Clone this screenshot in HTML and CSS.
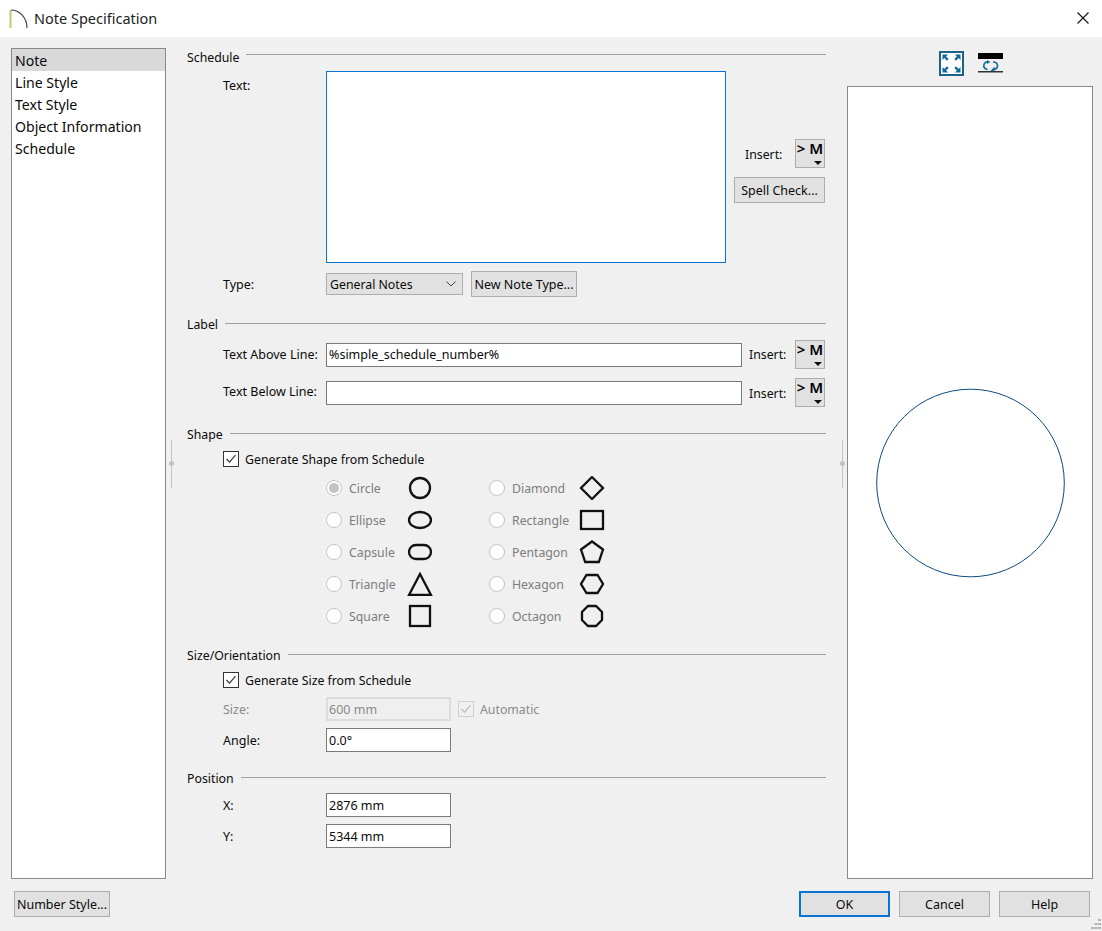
FILE: index.html
```html
<!DOCTYPE html>
<html lang="en">
<head>
    <meta charset="UTF-8">
    <title>Note Specification</title>
    <link rel="stylesheet" href="styles.css">
</head>
<body>
    <div class="window">
        <div class="titlebar">
            <svg class="app-icon" width="20" height="20" viewBox="0 0 20 20">
                <path d="M1.5 1v18" stroke="#b5d06a" stroke-width="2" fill="none"/>
                <path d="M2 1c8 0 16 7 16 18" stroke="#444" stroke-width="1.2" fill="none"/>
            </svg>
            <span class="title">Note Specification</span>
            <svg class="close-icon" width="12" height="12" viewBox="0 0 12 12">
                <path d="M0.5 0.5l11 11M11.5 0.5l-11 11" stroke="#111" stroke-width="1.1" fill="none"/>
            </svg>
        </div>

        <div class="content">
            <ul class="nav-list">
                <li class="selected">Note</li>
                <li>Line Style</li>
                <li>Text Style</li>
                <li>Object Information</li>
                <li>Schedule</li>
            </ul>

            <div class="splitter splitter-left"><span class="splitter-dot"></span></div>

            <div class="form-panel">
                <div class="section section-first">
                    <div class="section-head section-head-high"><span>Schedule</span><i></i></div>
                    <div class="row text-row">
                        <label class="field-label label-top">Text:</label>
                        <textarea class="text-area"></textarea>
                        <div class="text-side">
                            <div class="insert-line">
                                <span class="insert-text">Insert:</span>
                                <button class="macro-btn"><b>&gt; M</b><i class="caret"></i></button>
                            </div>
                            <button class="btn spell-btn">Spell Check...</button>
                        </div>
                    </div>
                    <div class="row type-row">
                        <label class="field-label">Type:</label>
                        <div class="select-box">
                            <span>General Notes</span>
                            <svg width="10" height="6" viewBox="0 0 10 6"><path d="M0.5 0.5l4.5 4.5 4.5-4.5" stroke="#444" fill="none"/></svg>
                        </div>
                        <button class="btn new-type-btn">New Note Type...</button>
                    </div>
                </div>

                <div class="section">
                    <div class="section-head"><span>Label</span><i></i></div>
                    <div class="row line-row line-row-first">
                        <label class="field-label">Text Above Line:</label>
                        <input class="input input-wide" type="text" value="%simple_schedule_number%">
                        <span class="insert-label">Insert:</span>
                        <button class="macro-btn"><b>&gt; M</b><i class="caret"></i></button>
                    </div>
                    <div class="row line-row">
                        <label class="field-label below-label">Text Below Line:</label>
                        <input class="input input-wide" type="text">
                        <span class="insert-label insert-text">Insert:</span>
                        <button class="macro-btn"><b>&gt; M</b><i class="caret"></i></button>
                    </div>
                </div>

                <div class="section">
                    <div class="section-head"><span>Shape</span><i></i></div>
                    <div class="check-row">
                        <span class="check"><svg width="14" height="14" viewBox="0 0 14 14"><path d="M2.5 7l3 3.2 6-7" stroke="#333" stroke-width="1.2" fill="none"/></svg></span>
                        <span>Generate Shape from Schedule</span>
                    </div>
                    <div class="shape-options">
                        <div class="shape-col shape-col-a">
                            <div class="shape-item">
                                <span class="radio radio-on"></span><span class="shape-name">Circle</span>
                                <svg class="shape-icon" width="34" height="24" viewBox="0 0 34 24"><circle cx="17" cy="12" r="10"/></svg>
                            </div>
                            <div class="shape-item">
                                <span class="radio"></span><span class="shape-name">Ellipse</span>
                                <svg class="shape-icon" width="34" height="24" viewBox="0 0 34 24"><ellipse cx="17" cy="12" rx="11" ry="8"/></svg>
                            </div>
                            <div class="shape-item">
                                <span class="radio"></span><span class="shape-name">Capsule</span>
                                <svg class="shape-icon" width="34" height="24" viewBox="0 0 34 24"><rect x="6" y="5" width="22" height="14" rx="7"/></svg>
                            </div>
                            <div class="shape-item">
                                <span class="radio"></span><span class="shape-name">Triangle</span>
                                <svg class="shape-icon" width="34" height="24" viewBox="0 0 34 24"><path d="M17 2l11 21H6z"/></svg>
                            </div>
                            <div class="shape-item">
                                <span class="radio"></span><span class="shape-name">Square</span>
                                <svg class="shape-icon" width="34" height="24" viewBox="0 0 34 24"><rect x="7" y="2" width="20" height="20"/></svg>
                            </div>
                        </div>
                        <div class="shape-col shape-col-b">
                            <div class="shape-item">
                                <span class="radio"></span><span class="shape-name">Diamond</span>
                                <svg class="shape-icon" width="34" height="24" viewBox="0 0 34 24"><path d="M17 1l11 11-11 11-11-11z"/></svg>
                            </div>
                            <div class="shape-item">
                                <span class="radio"></span><span class="shape-name">Rectangle</span>
                                <svg class="shape-icon" width="34" height="24" viewBox="0 0 34 24"><rect x="6" y="3" width="22" height="18"/></svg>
                            </div>
                            <div class="shape-item">
                                <span class="radio"></span><span class="shape-name">Pentagon</span>
                                <svg class="shape-icon" width="34" height="24" viewBox="0 0 34 24"><path d="M17 1.500l11 8-4.200 12.500H10.200L6 9.500z"/></svg>
                            </div>
                            <div class="shape-item">
                                <span class="radio"></span><span class="shape-name">Hexagon</span>
                                <svg class="shape-icon" width="34" height="24" viewBox="0 0 34 24"><path d="M11.500 3h11L28 12l-5.500 9h-11L6 12z"/></svg>
                            </div>
                            <div class="shape-item">
                                <span class="radio"></span><span class="shape-name">Octagon</span>
                                <svg class="shape-icon" width="34" height="24" viewBox="0 0 34 24"><path d="M13 2h8l6 6v8l-6 6h-8l-6-6V8z"/></svg>
                            </div>
                        </div>
                    </div>
                </div>

                <div class="section">
                    <div class="section-head"><span>Size/Orientation</span><i></i></div>
                    <div class="check-row">
                        <span class="check"><svg width="14" height="14" viewBox="0 0 14 14"><path d="M2.5 7l3 3.2 6-7" stroke="#333" stroke-width="1.2" fill="none"/></svg></span>
                        <span>Generate Size from Schedule</span>
                    </div>
                    <div class="row size-row">
                        <label class="field-label disabled-text">Size:</label>
                        <input class="input input-small input-disabled" type="text" value="600 mm" disabled>
                        <span class="check check-disabled"><svg width="14" height="14" viewBox="0 0 14 14"><path d="M2.5 7l3 3.2 6-7" stroke="#bbb" stroke-width="1.2" fill="none"/></svg></span>
                        <span class="disabled-text auto-label">Automatic</span>
                    </div>
                    <div class="row angle-row">
                        <label class="field-label">Angle:</label>
                        <input class="input input-small" type="text" value="0.0°">
                    </div>
                </div>

                <div class="section section-position">
                    <div class="section-head"><span>Position</span><i></i></div>
                    <div class="row pos-x-row">
                        <label class="field-label">X:</label>
                        <input class="input input-small" type="text" value="2876 mm">
                    </div>
                    <div class="row pos-y-row">
                        <label class="field-label">Y:</label>
                        <input class="input input-small" type="text" value="5344 mm">
                    </div>
                </div>
            </div>

            <div class="splitter splitter-right"><span class="splitter-dot"></span></div>

            <div class="preview-panel">
                <div class="preview-tools">
                    <svg width="25" height="25" viewBox="0 0 25 25">
                        <rect x="1" y="1" width="23" height="23" fill="#fff" stroke="#1b6488" stroke-width="2"/>
                        <g fill="#0f6a99">
                            <path d="M3.500 3.500h5.500l-1.900 1.900 2.600 2.600-1.700 1.700-2.600-2.600-1.900 1.900z"/>
                            <path d="M21.500 3.500h-5.500l1.900 1.900-2.600 2.600 1.700 1.700 2.600-2.600 1.900 1.900z"/>
                            <path d="M3.500 21.500h5.500l-1.900-1.900 2.600-2.600-1.700-1.700-2.600 2.600-1.900-1.900z"/>
                            <path d="M21.500 21.500h-5.500l1.900-1.900-2.600-2.600 1.700-1.700 2.600 2.600 1.900-1.900z"/>
                        </g>
                    </svg>
                    <svg width="25" height="25" viewBox="0 0 25 25">
                        <rect x="0" y="2" width="25" height="6" fill="#000"/>
                        <rect x="0" y="20" width="25" height="1.500" fill="#333"/>
                        <path d="M10.500 11C7.500 10.500 5.800 12.500 5.800 14.800 5.800 16.800 7 18 9.500 18.500" stroke="#1a6e9c" stroke-width="1.700" fill="none"/>
                        <path d="M9 9l3.500 2-3.500 2z" fill="#1a6e9c"/>
                        <path d="M15 11c3 0 4.500 1.500 4.500 3.700 0 2-1.500 3.500-4 3.800" stroke="#1a6e9c" stroke-width="1.700" fill="none"/>
                        <path d="M16.500 15.500v4.500h-4z" fill="#1a6e9c"/>
                    </svg>
                </div>
                <div class="preview-box">
                    <svg width="190" height="190" viewBox="0 0 190 190">
                        <circle cx="95.500" cy="95" r="93.800" fill="none" stroke="#0b4a82"/>
                    </svg>
                </div>
            </div>
        </div>

        <div class="footer">
            <button class="btn number-btn">Number Style...</button>
            <div class="footer-actions">
                <button class="btn action-btn ok-btn">OK</button>
                <button class="btn action-btn">Cancel</button>
                <button class="btn action-btn">Help</button>
            </div>
        </div>

        <svg class="grip" width="10" height="10" viewBox="0 0 10 10">
            <g fill="#b4b4b4">
                <rect x="7" y="0" width="3" height="2"/>
                <rect x="3.500" y="4" width="3" height="2"/><rect x="7" y="4" width="3" height="2"/>
                <rect x="0" y="8" width="3" height="2"/><rect x="3.500" y="8" width="3" height="2"/><rect x="7" y="8" width="3" height="2"/>
            </g>
        </svg>
    </div>
</body>
</html>
```

FILE: styles.css
```css
* {
    margin: 0;
    padding: 0;
    box-sizing: border-box;
}

body {
    font-family: 'Noto Sans', sans-serif;
    font-size: 12.3px;
    color: #0a0a0a;
    background: #f0f0f0;
    overflow: hidden;
}

button,
input,
textarea {
    font: inherit;
    color: inherit;
    border-radius: 0;
    outline: none;
}

.window {
    position: relative;
    width: 1102px;
    height: 931px;
    display: flex;
    flex-direction: column;
}

/* title bar */
.titlebar {
    height: 37px;
    flex: none;
    background: #fff;
    display: flex;
    align-items: center;
    padding: 0 13px 0 9px;
}

.title {
    margin-left: 5px;
    margin-bottom: 2px;
    font-size: 14.5px;
    color: #222;
}

.close-icon {
    margin-left: auto;
    margin-bottom: 1px;
}

/* main columns */
.content {
    flex: none;
    height: 842px;
    padding: 11px 9px 0 11px;
    display: flex;
}

.nav-list {
    width: 155px;
    flex: none;
    list-style: none;
    background: #fff;
    border: 1px solid #868a8e;
}

.nav-list li {
    height: 22px;
    line-height: 24px;
    padding-left: 3px;
    font-size: 14.1px;
}

.nav-list li.selected {
    background: #d9d9d9;
}

.splitter {
    width: 3px;
    height: 48px;
    flex: none;
    align-self: center;
    display: flex;
    align-items: center;
    justify-content: center;
    position: relative;
}

.splitter::before {
    content: '';
    width: 1px;
    height: 100%;
    background: #c4c4c4;
}

.splitter-dot {
    position: absolute;
    width: 5px;
    height: 5px;
    left: -1px;
    top: 21px;
    border-radius: 50%;
    background: #c4c4c4;
}

.splitter-left {
    margin: 0 14px 0 4px;
}

.splitter-right {
    margin: 0 3px 0 15px;
}

.form-panel {
    width: 639px;
    flex: none;
}

/* sections */
.section {
    margin-top: 18px;
    padding-right: 1px;
}

.section-first {
    margin-top: 0;
}

.section-position {
    margin-top: 17px;
}

.section-head {
    height: 18px;
    margin-right: -1px;
    display: flex;
    align-items: center;
}

.section-head i {
    flex: 1;
    height: 1px;
    margin: 0 0 2px 7px;
    background: #a0a0a0;
}

.section-head-high i {
    margin-bottom: 6px;
}

.row {
    display: flex;
    align-items: center;
    padding-left: 36px;
}

.field-label {
    width: 103px;
    flex: none;
    font-size: 12.5px;
}

.label-top {
    align-self: flex-start;
    padding-top: 6px;
}

.below-label {
    padding-bottom: 2px;
}

.insert-text {
    padding-top: 2px;
}

.disabled-text {
    color: #8a8a8a;
}

.text-row {
    margin-top: 5px;
}

.text-area {
    width: 400px;
    height: 192px;
    flex: none;
    border: 1px solid #0a74d0;
    background: #fff;
    resize: none;
}

.text-side {
    margin: 0 0 60px 8px;
    width: 91px;
    align-self: flex-end;
}

.insert-line {
    display: flex;
    align-items: center;
    justify-content: space-between;
    padding-left: 11px;
    margin-bottom: 9px;
}

.macro-btn {
    position: relative;
    width: 30px;
    height: 29px;
    flex: none;
    background: #e1e1e1;
    border: 1px solid #adadad;
    display: flex;
    justify-content: center;
    align-items: flex-start;
}

.macro-btn b {
    font-weight: 600;
    font-size: 15px;
    line-height: 17px;
    white-space: nowrap;
    color: #000;
}

.caret {
    position: absolute;
    right: 2px;
    bottom: 2px;
    border-style: solid;
    border-width: 4px 4px 0;
    border-color: #111 transparent transparent;
}

.btn {
    height: 26px;
    background: #e1e1e1;
    border: 1px solid #adadad;
    text-align: center;
    white-space: nowrap;
    font-size: 12.5px;
}

.spell-btn {
    width: 91px;
    display: block;
}

.type-row {
    margin-top: 8px;
}

.select-box {
    width: 137px;
    height: 22px;
    background: #e1e1e1;
    border: 1px solid #adadad;
    padding: 0 6px 0 3px;
    display: flex;
    align-items: center;
    justify-content: space-between;
}

.new-type-btn {
    width: 106px;
    margin-left: 8px;
}

.line-row {
    margin-top: 9px;
}

.line-row-first {
    margin-top: 7px;
}

.input {
    height: 24px;
    background: #fff;
    border: 1px solid #7a7a7a;
    padding: 0 2px;
    flex: none;
    font-size: 12.5px;
}

.input-wide {
    width: 416px;
}

.input-small {
    width: 125px;
}

.input-disabled {
    background: #efefef;
    border: 2px solid #dcdcdc;
    padding: 0 1px;
    color: #8a8a8a;
}

.insert-label {
    margin-left: 7px;
    margin-right: auto;
}

/* shape options */
.check-row {
    display: flex;
    align-items: center;
    margin-top: 8px;
    padding-left: 36px;
    height: 16px;
}

.check {
    width: 16px;
    height: 16px;
    margin-right: 6px;
    flex: none;
    background: #fff;
    border: 1px solid #333;
    display: flex;
    align-items: center;
    justify-content: center;
}

.check-disabled {
    margin: 0 6px 0 7px;
    background: #f0f0f0;
    border-color: #cfcfcf;
}

.shape-options {
    display: flex;
    margin-top: 9px;
    padding-left: 139px;
}

.shape-col {
    display: flex;
    flex-direction: column;
    gap: 8px;
}

.shape-col-a {
    width: 163px;
}

.shape-col-a .shape-name {
    width: 54px;
}

.shape-col-b .shape-name {
    width: 63px;
}

.shape-item {
    display: flex;
    align-items: center;
    height: 24px;
}

.radio {
    width: 16px;
    height: 16px;
    margin-right: 7px;
    flex: none;
    border: 1px solid #c6c6c6;
    border-radius: 50%;
    background: #fff;
}

.radio-on {
    background: radial-gradient(circle, #c4c4c4 0, #c4c4c4 4.5px, #fff 5.5px);
}

.shape-name {
    flex: none;
    color: #7d7d7d;
    white-space: nowrap;
}

.shape-icon {
    flex: none;
    fill: none;
    stroke: #111;
    stroke-width: 2.3;
}

.size-row {
    margin-top: 9px;
}

.angle-row {
    margin-top: 7px;
}

.pos-x-row {
    margin-top: 6px;
}

.pos-y-row {
    margin-top: 7px;
}

/* preview */
.preview-panel {
    width: 246px;
    flex: none;
}

.preview-tools {
    height: 38px;
    display: flex;
    justify-content: center;
    gap: 14px;
    padding-top: 3px;
    padding-left: 1px;
}

.preview-box {
    height: 793px;
    background: #fff;
    border: 1px solid #868a8e;
    display: flex;
    align-items: center;
    justify-content: center;
}

/* footer */
.footer {
    flex: 1;
    display: flex;
    justify-content: space-between;
    padding: 12px 12px 0 14px;
}

.number-btn {
    width: 96px;
}

.footer-actions {
    display: flex;
    gap: 9px;
}

.action-btn {
    width: 91px;
}

.ok-btn {
    border: 2px solid #0a74d0;
}

.grip {
    position: absolute;
    right: 1px;
    bottom: 2px;
}
```
